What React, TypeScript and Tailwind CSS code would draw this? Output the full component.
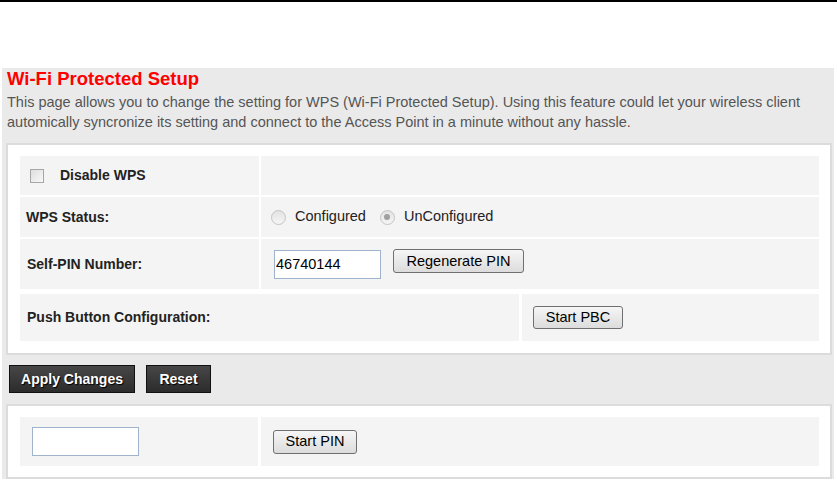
import React from "react";

function Radio({ checked }: { checked?: boolean }) {
  return (
    <span className="inline-flex h-[15px] w-[15px] items-center justify-center rounded-full border border-[#c4c4c4] bg-linear-to-b from-[#e2e2e2] to-[#f6f6f6]">
      {checked && <span className="h-[6px] w-[6px] rounded-full bg-[#a0a0a0]" />}
    </span>
  );
}

function GrayButton({ children, className = "" }: { children: React.ReactNode; className?: string }) {
  return (
    <button
      type="button"
      className={
        "rounded-[3px] border border-[#707070] bg-linear-to-b from-[#f6f6f6] to-[#dcdcdc] text-[14.5px] font-normal leading-none text-black " +
        className
      }
    >
      {children}
    </button>
  );
}

function DarkButton({ children, className = "" }: { children: React.ReactNode; className?: string }) {
  return (
    <button
      type="button"
      className={
        "h-[28px] border border-[#111] bg-linear-to-b from-[#474747] to-[#2c2c2c] text-[14px] font-bold text-white [text-shadow:1px_1px_1px_#000] " +
        className
      }
    >
      {children}
    </button>
  );
}

export default function App() {
  return (
    <div className="min-h-[480px] overflow-hidden bg-white font-['Liberation_Sans',Arial,sans-serif]">
      <div className="h-[2px] bg-black" />
      <div className="h-[66px]" />

      <div className="ml-[2px] w-[832px] bg-[#eaeaea] pl-[4px] pr-[2px]">
        {/* heading */}
        <h1 className="pl-[1px] text-[18.5px] font-bold leading-[22px] text-[#f00]">Wi-Fi Protected Setup</h1>
        <p className="mt-[2px] pl-[1px] text-[14.5px] leading-[20px] text-[#555]">
          This page allows you to change the setting for WPS (Wi-Fi Protected Setup). Using this feature could let your wireless client
          <br />
          automically syncronize its setting and connect to the Access Point in a minute without any hassle.
        </p>

        {/* main settings box */}
        <div className="mt-[11px] border-2 border-[#dcdcdc] bg-white pb-[12px] pl-[12px] pr-[11px] pt-[11px]">
          <div className="grid grid-cols-[239px_1fr] gap-[2px] text-[14px] font-bold text-[#222]">
            <div className="flex h-[39px] items-center bg-[#f4f4f4] pl-[10px]">
              <span className="h-[14px] w-[14px] border border-[#a6a6a6] bg-linear-to-br from-[#dedede] to-[#f8f8f8]" />
              <span className="ml-[16px]">Disable WPS</span>
            </div>
            <div className="h-[39px] bg-[#f4f4f4]" />

            <div className="flex h-[40px] items-center bg-[#f4f4f4] pl-[6px]">WPS Status:</div>
            <div className="flex h-[40px] items-center bg-[#f4f4f4] pl-[10px] text-[14.5px] font-normal">
              <Radio />
              <span className="ml-[9px]">Configured</span>
              <span className="ml-[14px] inline-flex">
                <Radio checked />
              </span>
              <span className="ml-[9px]">UnConfigured</span>
            </div>

            <div className="flex h-[50px] items-center bg-[#f4f4f4] pl-[7px]">Self-PIN Number:</div>
            <div className="flex h-[50px] items-center bg-[#f4f4f4] pl-[13px]">
              <input
                readOnly
                value="46740144"
                className="h-[29px] w-[107px] border border-[#9fb4cc] bg-white px-[1px] text-[14.5px] font-normal text-black outline-none"
              />
              <GrayButton className="-mt-[6px] ml-[12px] h-[24px] w-[131px]">Regenerate PIN</GrayButton>
            </div>
          </div>

          <div className="mt-[5px] grid grid-cols-[499px_1fr] gap-[3px] text-[14px] font-bold text-[#222]">
            <div className="flex h-[47px] items-center bg-[#f4f4f4] pl-[7px]">Push Button Configuration:</div>
            <div className="flex h-[47px] items-center bg-[#f4f4f4] pl-[11px]">
              <GrayButton className="h-[23px] w-[90px]">Start PBC</GrayButton>
            </div>
          </div>
        </div>

        {/* actions */}
        <div className="mt-[10px] flex gap-[11px] pl-[3px]">
          <DarkButton className="w-[126px]">Apply Changes</DarkButton>
          <DarkButton className="w-[65px]">Reset</DarkButton>
        </div>

        {/* client PIN box */}
        <div className="mt-[11px] border-2 border-[#dcdcdc] bg-white pb-[11px] pl-[12px] pr-[11px] pt-[11px]">
          <div className="grid grid-cols-[238px_1fr] gap-[3px]">
            <div className="flex h-[49px] items-center bg-[#f4f4f4] pl-[12px]">
              <input className="h-[29px] w-[107px] border border-[#9fb4cc] bg-white text-[14.5px] outline-none" />
            </div>
            <div className="flex h-[49px] items-center bg-[#f4f4f4] pl-[12px]">
              <GrayButton className="h-[24px] w-[84px]">Start PIN</GrayButton>
            </div>
          </div>
        </div>
      </div>
    </div>
  );
}
